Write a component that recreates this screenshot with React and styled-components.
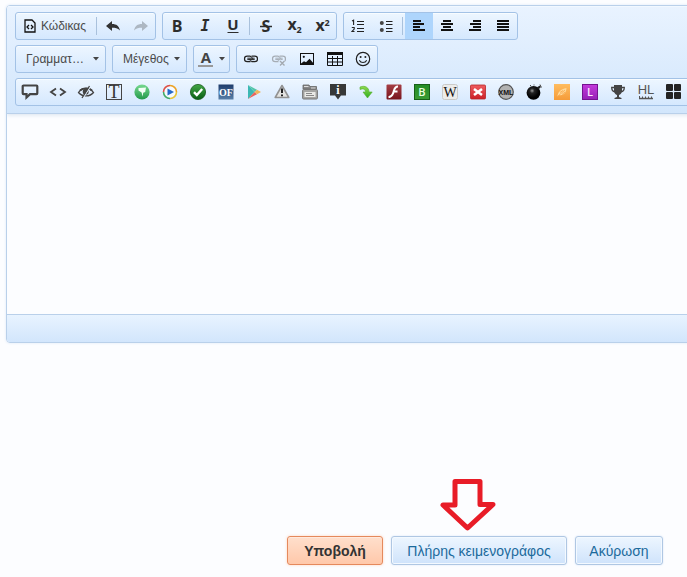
import React from "react";
import styled, { createGlobalStyle, css } from "styled-components";

const GlobalStyle = createGlobalStyle`
  *, *::before, *::after { box-sizing: border-box; }
  body {
    margin: 0;
    background: #fcfdff;
    font-family: "Liberation Sans", Arial, sans-serif;
    color: #4a4a4a;
    overflow: hidden;
  }
`;

const Page = styled.main`
  padding: 5px 0 12px 6px;
  overflow: hidden;
`;

const Editor = styled.section`
  margin-right: -16px;
  border: 1px solid #b9d0ea;
  border-radius: 4px;
  box-shadow: 0 0 3px #dde9f6;
  overflow: hidden;
`;

const Toolbar = styled.div`
  display: flex;
  flex-direction: column;
  gap: 5px;
  padding: 6px 8px 7px;
  border-bottom: 1px solid #b9d0ea;
  background: linear-gradient(#e9f3ff, #d2e6fc);
  box-shadow: inset 0 1px #f1f8ff, 0 1px 4px #d9e3ee;
  position: relative;
`;

const Row = styled.div`
  display: flex;
  gap: 6px;
`;

const Group = styled.div`
  display: flex;
  flex: ${(p) => (p.$grow ? "1 0 auto" : "none")};
  height: 28px;
  align-items: center;
  border: 1px solid #a3c2e6;
  border-radius: 3px;
  background: linear-gradient(#edf6ff, #d5e8fe);
  box-shadow: inset 0 1px #f8fcff;
`;

const Separator = styled.span`
  width: 1px;
  height: 18px;
  margin: 0 2px;
  background: #a9c1dc;
`;

const Tool = styled.button`
  display: flex;
  align-items: center;
  justify-content: center;
  gap: 5px;
  flex: none;
  width: ${(p) => p.$width || 28}px;
  height: 26px;
  padding: 0;
  border: 0;
  background: ${(p) => (p.$active ? "#aed5fc" : "transparent")};
  color: #4a4a4a;
  font: 12px "Liberation Sans", Arial, sans-serif;
  svg { display: block; flex: none; overflow: visible; }
`;

const Picker = styled.label`
  display: grid;
  align-items: center;
  height: 26px;
  width: ${(p) => p.$width}px;
  > * { grid-area: 1 / 1; }
  > svg { justify-self: end; margin-right: 6px; pointer-events: none; }
`;

const Select = styled.select`
  appearance: none;
  width: 100%;
  height: 26px;
  padding: 0 0 0 10px;
  border: 0;
  background: transparent;
  color: #4a4a4a;
  font: 12px "Liberation Sans", Arial, sans-serif;
`;

const TextArea = styled.textarea`
  display: block;
  width: 100%;
  height: 200px;
  padding: 10px;
  border: 0;
  resize: none;
  outline: 0;
  background: #fcfdff;
  font: 14px "Liberation Sans", Arial, sans-serif;
`;

const StatusBar = styled.div`
  height: 28px;
  border-top: 1px solid #b9d0ea;
  background: linear-gradient(#e8f3ff, #d2e6fc);
`;

const Actions = styled.div`
  display: flex;
  justify-content: flex-end;
  gap: 8px;
  padding: 193px 24px 0 0;
`;

const primary = css`
  border-color: #e5895c;
  background: linear-gradient(#ffdfcc, #ffc8aa);
  box-shadow: 0 0 3px #ffd5bd, inset 0 1px #ffe9dd;
  color: #333;
  font-weight: bold;
`;

const Action = styled.button`
  width: ${(p) => p.$width}px;
  height: 29px;
  padding: 0;
  white-space: nowrap;
  border: 1px solid #afc7e3;
  border-radius: 3px;
  background: linear-gradient(#edf6ff, #cfe3fb);
  box-shadow: 0 0 2px #d5e4f5, inset 0 0 0 1px #f3f9ff;
  color: #1b6a9c;
  font: 14px "Liberation Sans", Arial, sans-serif;
  ${(p) => p.$primary && primary}
`;

const Marked = styled.div`
  position: relative;
`;

const Pointer = styled.svg`
  position: absolute;
  left: 50%;
  bottom: 100%;
  margin: 0 0 5px -39px;
`;

const Icon = ({ children, size = 16 }) => (
  <svg width={size} height={size} viewBox="0 0 16 16" fill="none" aria-hidden="true">
    {children}
  </svg>
);

const Caret = () => (
  <svg width="6" height="4" viewBox="0 0 6 4" aria-hidden="true">
    <path d="M0 0h6L3 3.4z" fill="#444" />
  </svg>
);

const Glyph = ({ x = 8, y = 14, size = 16, fill = "#2d2d2d", family = "Open Sans", weight = 700, italic, children }) => (
  <text x={x} y={y} fontSize={size} fill={fill} fontFamily={`"${family}", sans-serif`} fontWeight={weight}
    fontStyle={italic ? "italic" : "normal"} textAnchor="middle">{children}</text>
);

const Lines = ({ rows }) => (
  <Icon>
    {rows.map(([x, w], i) => <rect key={i} x={x} y={2 + i * 3} width={w} height="2" fill="#111" />)}
  </Icon>
);

const chain = (
  <>
    <path d="M7.5 5.2H4.2a2.7 2.7 0 0 0 0 5.4h3.3M8.5 5.2h3.3a2.7 2.7 0 0 1 0 5.4H8.500" strokeWidth="1.2" />
    <path d="M7 5.4c2 .4 2.5 1.4 2.3 2.5M9 10.4c-2-.4-2.5-1.4-2.3-2.5M4.3 7.2h7.4M4.3 8.6h7.4" strokeWidth="1" />
  </>
);

const formatTools = [
  ["Έντονα", <Icon><Glyph>B</Glyph></Icon>],
  ["Πλάγια", <Icon><Glyph y={13} family="DejaVu Sans Mono" italic size={15}>I</Glyph></Icon>],
  ["Υπογράμμιση", <Icon><Glyph y={12} size={15}>U</Glyph><path d="M2.5 14.5h11" stroke="#2d2d2d" /></Icon>],
  null,
  ["Διαγραφή", <Icon><Glyph>S</Glyph><path d="M2 8.5h12" stroke="#2d2d2d" strokeWidth="1.4" /></Icon>],
  ["Δείκτης", <Icon><Glyph x={6} y={12} size={16}>x</Glyph><Glyph x={13} y={15} size={9}>2</Glyph></Icon>],
  ["Εκθέτης", <Icon><Glyph x={6} y={13} size={16}>x</Glyph><Glyph x={13} y={8} size={9}>2</Glyph></Icon>],
];

const listTools = [
  ["Αριθμημένη λίστα", <Icon><path d="M2 3l1.600-.8V7M1.800 9.500h2.400V11L2 13.500h2.500" stroke="#222" strokeWidth="1.1" /><path d="M7 3.500h7M7 6.500h7M7 10.500h7M7 13.500h7" stroke="#222" strokeWidth="1.2" /></Icon>],
  ["Λίστα", <Icon><circle cx="3.8" cy="5" r="2" fill="#444" /><circle cx="3.8" cy="12" r="2" fill="#444" /><path d="M8 3.500h6.500M8 6.500h6.500M8 10.500h6.500M8 13.500h6.500" stroke="#222" strokeWidth="1.2" /></Icon>],
  null,
  ["Αριστερά", <Lines rows={[[2, 8], [2, 11], [2, 7], [2, 12]]} />, true],
  ["Κέντρο", <Lines rows={[[4, 8], [2, 12], [4, 8], [2, 12]]} />],
  ["Δεξιά", <Lines rows={[[6, 8], [3, 11], [6, 8], [2, 12]]} />],
  ["Πλήρης στοίχιση", <Lines rows={[[2, 12], [2, 12], [2, 12], [2, 12]]} />],
];

const insertTools = [
  ["Σύνδεσμος", <Icon><g stroke="#222">{chain}</g></Icon>],
  ["Αφαίρεση συνδέσμου", <Icon><g stroke="#a6adb5">{chain}</g><path d="M8.500 9.500l5 5M13.500 9.500l-5 5" stroke="#dfeeff" strokeWidth="3" /><path d="M9 10l4.500 4.500M13.500 10L9 14.500" stroke="#a3a9b0" strokeWidth="1.400" /></Icon>],
  ["Εικόνα", <Icon><rect x="1.500" y="2.500" width="13" height="11" stroke="#111" /><circle cx="4.800" cy="5.800" r="1.100" fill="#111" /><path d="M2 12.500l3-2.300 2 1 3.500-3.500 3.500 4V13H2z" fill="#111" /></Icon>],
  ["Πίνακας", <Icon><path d="M.5 1.500h15v13H.5zM.5 7.500h15M.5 11h15M5.500 5v9.500M10.500 5v9.500" stroke="#111" /><path d="M0 1h16v3H0z" fill="#111" /></Icon>],
  ["Εικονίδια διάθεσης", <Icon><circle cx="8" cy="8" r="6.700" stroke="#222" strokeWidth="1.200" /><circle cx="5.600" cy="6" r="1" fill="#222" /><circle cx="10.400" cy="6" r="1" fill="#222" /><path d="M4.300 9.300c1.500 3 5.900 3 7.400 0" stroke="#222" strokeWidth="1.100" /></Icon>],
];

const extraTools = [
  ["Παράθεση", <Icon><path d="M1.500 1.500h13a.8.8 0 0 1 .8.8v7a.8.8 0 0 1-.8.8H8L4.500 13.500v-3.400h-3a.8.8 0 0 1-.8-.8v-7a.8.8 0 0 1 .8-.8z" stroke="#444" strokeWidth="2.200" /></Icon>],
  ["Κώδικας ενότητας", <Icon><path d="M6 4.500L1 8l5 3.500M10 4.500L15 8l-5 3.500" stroke="#444" strokeWidth="1.800" /></Icon>],
  ["Απόκρυψη", <Icon><path d="M.5 8.500C4 3 12 3 15.500 8.500 12 13 4 13 .5 8.500z" stroke="#444" strokeWidth="1.300" /><circle cx="7.700" cy="7.800" r="3" fill="#444" /><path d="M2 6.500C5 4 11 3.500 14 6.500" stroke="#444" strokeWidth="1.800" /><path d="M12.500 2.500L5.500 13.500" stroke="#e3f0fe" strokeWidth="1.200" /><path d="M11.500 2L4 14" stroke="#444" strokeWidth="1.300" /></Icon>],
  ["Τίτλος", <Icon><rect x=".5" y=".5" width="15" height="15" stroke="#444" /><Glyph y={14} size={18} family="Liberation Serif" weight={400} fill="#333">T</Glyph></Icon>],
  ["Καρφίτσωμα", <Icon><circle cx="8" cy="8" r="7.600" fill="url(#green)" /><path d="M4.500 4l7.500-.5-.8 4.500-2 .8-.6 4-1-4.300L4.500 6.500z" fill="#f2fff5" /></Icon>],
  ["Βίντεο", <Icon><circle cx="8" cy="8" r="6" fill="#f5faff" /><path d="M8 1.500A6.500 6.500 0 0 1 14.500 8" stroke="#eda326" strokeWidth="1.600" /><path d="M14.500 8A6.500 6.500 0 0 1 8 14.500" stroke="#e8c437" strokeWidth="1.600" /><path d="M8 14.500A6.500 6.500 0 0 1 1.500 8" stroke="#45ab68" strokeWidth="1.600" /><path d="M1.500 8A6.500 6.500 0 0 1 8 1.500" stroke="#dd5147" strokeWidth="1.600" /><path d="M5.500 4.500L12 8l-6.500 3.500z" fill="#2469c9" /></Icon>],
  ["Εγκεκριμένο", <Icon><circle cx="8" cy="8" r="7.600" fill="url(#check)" stroke="#16591b" strokeWidth=".8" /><path d="M4 8.200l2.800 2.800L12.200 5" stroke="#fff" strokeWidth="2.400" /></Icon>],
  ["OF", <Icon><rect width="15" height="15" x=".5" y=".5" fill="url(#navy)" /><Glyph y={12} size={10} family="Liberation Serif" fill="#fff">OF</Glyph></Icon>],
  ["Εφαρμογή", <Icon><path d="M2 1l6.500 7L2 15z" fill="#3bb8b4" /><path d="M2 1l9 4.700L8.500 8z" fill="#53c6a8" /><path d="M2 15l9-4.700L8.500 8z" fill="#e8645b" /><path d="M11 5.700L15 8l-4 2.300L8.500 8z" fill="#efb35b" /></Icon>],
  ["Προειδοποίηση", <Icon><path d="M8 1.500L14.800 13.500H1.200z" fill="#e3e3e1" stroke="#929292" strokeWidth="1.600" strokeLinejoin="round" /><path d="M8 4.500V9M8 10.500v1.800" stroke="#171717" strokeWidth="1.900" /></Icon>],
  ["Καρτέλες", <Icon><path d="M1 4V1h6l1 1.500h6.500V5H1z" fill="#888" stroke="#666" strokeWidth=".8" /><path d="M2 2.500h4.500M9 4h4.500" stroke="#ddd" /><rect x=".6" y="5.500" width="14.800" height="9.500" rx="1" fill="#a5a5a3" stroke="#777" /><path d="M2.500 8h11v5h-11z" fill="#e9e9e6" /><path d="M4 9.500h6M4 11.500h8" stroke="#888" /></Icon>],
  ["Πληροφορία", <Icon><path d="M0 0h16v11.500h-5L8 15.500l-3-4H0z" fill="#363838" /><Glyph y={10} size={12} family="Liberation Serif" fill="#fff">i</Glyph></Icon>],
  ["Μετάβαση", <Icon><path d="M2 3c5-2 9 .5 9 5h3.200L9.500 14 5 8h2.500C7.500 5.500 5.500 4 2 5.500z" fill="url(#lime)" stroke="#56ae2c" strokeWidth=".6" /></Icon>],
  ["Flash", <Icon><rect x=".5" y=".5" width="15" height="15" fill="url(#maroon)" rx="1" /><path d="M12 2.500C8 2.500 8.500 6 7 9.500c-.8 2.300-2 3.500-4.500 3.700M6.800 7.600h4.700" stroke="#fff" strokeWidth="2" /></Icon>],
  ["B", <Icon><rect x=".5" y=".5" width="15" height="15" fill="url(#forest)" stroke="#176018" /><Glyph y={12} size={11} fill="#eaffdf" weight={600}>B</Glyph></Icon>],
  ["Wikipedia", <Icon><rect x=".5" y=".5" width="15" height="15" rx="2" fill="#ececea" stroke="#cacac8" /><Glyph y={13} size={14} family="Liberation Serif" weight={400} fill="#111">W</Glyph></Icon>],
  ["Κλείσιμο", <Icon><rect x=".5" y="1" width="15" height="14" rx="1" fill="url(#red)" stroke="#b52728" strokeWidth=".8" /><path d="M4 5l8 6M12 5l-8 6" stroke="#fff" strokeWidth="2.600" /></Icon>],
  ["XML", <Icon><circle cx="8" cy="8" r="7.300" fill="#b2b2b1" stroke="#555" strokeWidth="1.200" /><Glyph y={11} size={7} family="Liberation Sans" fill="#111">XML</Glyph></Icon>],
  ["Βόμβα", <Icon><circle cx="7.500" cy="8.800" r="6.900" fill="url(#bomb)" /><path d="M10.500 3.500l3.500-2 1 1.500-2.500 2.500" fill="#222" /><path d="M14 .5l1.500 3M4 1l1 1M8 .5v1" stroke="#555" /></Icon>],
  ["Σημείωση", <Icon><rect width="16" height="16" fill="url(#orange)" /><path d="M3.500 12.500c0-4 3-7.500 9-8.500-.2 5-3.500 8-7.500 7z" fill="#ffd99a" /><path d="M3.500 12.500L11 6M6 8.500l3-2M8 10.500l3-2.500" stroke="#f7a648" strokeWidth=".8" /></Icon>],
  ["L", <Icon><rect x=".5" y=".5" width="15" height="15" fill="url(#violet)" stroke="#74138e" /><Glyph y={12} size={11} fill="#ffe7ff" weight={600}>L</Glyph></Icon>],
  ["Έπαθλο", <Icon><path d="M4 1h8v5.500c0 2.500-1.500 4-3 4.500v2l2.500 1v1h-7v-1l2.500-1v-2c-1.500-.5-3-2-3-4.500z" fill="#444" /><path d="M4.500 3.500H1.700C1.700 6 2.800 7.500 5 7.800M11.500 3.500h2.800c0 2.500-1.100 4-3.300 4.300" stroke="#444" strokeWidth="1.300" /></Icon>],
  ["HL", <Icon><Glyph y={10} size={13} family="Liberation Sans" weight={400} fill="#555">HL</Glyph><path d="M1 14.500h14" stroke="#555" strokeWidth="1.400" /><path d="M1.500 12v2M4.500 12.500v2M7.500 12.500v2M10.500 12.500v2M13.500 12.500v2" stroke="#555" /></Icon>],
  ["Πλέγμα", <Icon>{[[0, 0], [8, 0], [0, 8], [8, 8]].map(([x, y]) => <rect key={`${x}-${y}`} x={x} y={y} width="7" height="7" rx="1" fill="#242424" />)}</Icon>],
];

const gradients = [
  ["green", "#78d990", "#23994a"], ["check", "#43a746", "#075d13"],
  ["navy", "#1e3c6b", "#587fa8"], ["lime", "#8ed94e", "#30ae21"],
  ["maroon", "#a63f45", "#78151d"], ["forest", "#238c24", "#399b34"],
  ["red", "#ef5d60", "#cb2027"], ["orange", "#ffbd60", "#f59b39"],
  ["violet", "#c43adb", "#9620b7"],
];

function ToolGroup({ tools, grow }) {
  return (
    <Group $grow={grow}>
      {tools.map((tool, i) => tool
        ? <Tool key={tool[0]} type="button" aria-label={tool[0]} $active={tool[2]} aria-pressed={tool[2]}>{tool[1]}</Tool>
        : <Separator key={i} />)}
    </Group>
  );
}

export default function App() {
  return (
    <Page>
      <GlobalStyle />
      <Editor>
        <svg width="0" height="0" display="block" aria-hidden="true">
          <defs>
            {gradients.map(([id, from, to]) => (
              <linearGradient key={id} id={id} x2="0" y2="1">
                <stop stopColor={from} /><stop offset="1" stopColor={to} />
              </linearGradient>
            ))}
            <radialGradient id="bomb" cx=".4" cy=".35">
              <stop stopColor="#999" /><stop offset=".35" stopColor="#222" /><stop offset="1" />
            </radialGradient>
          </defs>
        </svg>
        <Toolbar role="toolbar" aria-label="Μορφοποίηση">
          <Row>
            <Group>
              <Tool type="button" $width={78}>
                <svg width="12" height="14" viewBox="0 0 12 14" fill="none" aria-hidden="true">
                  <path d="M1 1h7l3 3v9H1z" stroke="#111" strokeWidth="1.300" />
                  <path d="M5 6L3 8l2 2M7 6l2 2-2 2" stroke="#111" strokeWidth="1.300" />
                </svg>
                Κώδικας
              </Tool>
              <Separator />
              <Tool type="button" aria-label="Αναίρεση">
                <Icon><path d="M1 8l6-5v3c4.500 0 7 2 8 6.500C12.500 10 10.500 9.800 7 9.800V13z" fill="#333" /></Icon>
              </Tool>
              <Tool type="button" aria-label="Επανάληψη">
                <Icon><path d="M15 8L9 3v3c-4.500 0-7 2-8 6.500C3.500 10 5.500 9.800 9 9.800V13z" fill="#adb7c2" /></Icon>
              </Tool>
            </Group>
            <ToolGroup tools={formatTools} />
            <ToolGroup tools={listTools} />
          </Row>
          <Row>
            <Group>
              <Picker $width={89}>
                <Select aria-label="Γραμματοσειρά"><option>Γραμματ…</option></Select>
                <Caret />
              </Picker>
            </Group>
            <Group>
              <Picker $width={73}>
                <Select aria-label="Μέγεθος"><option>Μέγεθος</option></Select>
                <Caret />
              </Picker>
            </Group>
            <Group>
              <Tool type="button" aria-label="Χρώμα κειμένου" $width={35}>
                <Icon><Glyph y={12} size={15} fill="#444">A</Glyph><path d="M0 15h15" stroke="#999" strokeWidth="2" /></Icon>
                <Caret />
              </Tool>
            </Group>
            <ToolGroup tools={insertTools} />
          </Row>
          <Row>
            <ToolGroup tools={extraTools} grow />
          </Row>
        </Toolbar>
        <TextArea aria-label="Μήνυμα" />
        <StatusBar />
      </Editor>
      <Actions>
        <Action type="submit" $primary $width={96}>Υποβολή</Action>
        <Marked>
          <Pointer width="56" height="52" viewBox="0 0 56 52" fill="none" aria-hidden="true">
            <path d="M15 2.500h25v23h13L27.500 49 3 26h12z" stroke="#e81c27" strokeWidth="5" strokeLinejoin="round" />
          </Pointer>
          <Action type="button" $width={176}>Πλήρης κειμενογράφος</Action>
        </Marked>
        <Action type="button" $width={88}>Ακύρωση</Action>
      </Actions>
    </Page>
  );
}
